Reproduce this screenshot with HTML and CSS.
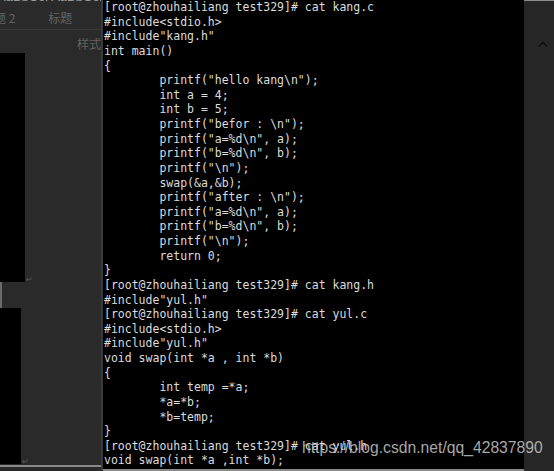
FILE: index.html
```html
<!DOCTYPE html>
<html>
<head>
<meta charset="utf-8">
<link rel="stylesheet" href="styles.css">
</head>
<body>
<div class="screen">
  <div class="left">
    <div class="cut"><span>AaBbCcI AaBbCcI AaBb</span></div>
    <div class="tabs"><span class="t1">题 2</span><span class="t2">标题</span></div>
    <div class="styles"><span>样式</span></div>
    <div class="doc">
      <div class="blk b1"><span class="ret">↵</span></div>
      <div class="gap"></div>
      <div class="blk b2"><span class="ret">↵</span></div>
      <div class="foot"></div>
    </div>
  </div>
  <div class="term"><pre>[root@zhouhailiang test329]# cat kang.c
#include&lt;stdio.h&gt;
#include"kang.h"
int main()
{
        printf("hello kang\n");
        int a = 4;
        int b = 5;
        printf("befor : \n");
        printf("a=%d\n", a);
        printf("b=%d\n", b);
        printf("\n");
        swap(&amp;a,&amp;b);
        printf("after : \n");
        printf("a=%d\n", a);
        printf("b=%d\n", b);
        printf("\n");
        return 0;
}
[root@zhouhailiang test329]# cat kang.h
#include"yul.h"
[root@zhouhailiang test329]# cat yul.c
#include&lt;stdio.h&gt;
#include"yul.h"
void swap(int *a , int *b)
{
        int temp =*a;
        *a=*b;
        *b=temp;
}
[root@zhouhailiang test329]# cat yul.h
void swap(int *a ,int *b);</pre></div>
  <div class="right">
    <svg class="chev" width="10" height="6" viewBox="0 0 10 6"><polyline points="1,5.5 5,1.5 9,5.5" fill="none" stroke="#111" stroke-width="1.6"/></svg>
  </div>
  <div class="mark">https://blog.csdn.net/qq_42837890</div>
</div>
</body>
</html>
```
FILE: styles.css
```css
html, body {
  margin: 0;
  padding: 0;
  background: #2a2a2a;
  overflow: hidden;
}
.screen {
  position: relative;
  width: 554px;
  height: 471px;
  display: flex;
}
.left {
  width: 101px;
  border-right: 2px solid #3a3a3a;
  display: flex;
  flex-direction: column;
  font-family: "Noto Sans CJK SC", "Noto Sans", sans-serif;
  color: #626262;
  font-size: 12px;
}
.cut {
  height: 3px;
  overflow: hidden;
}
.cut span {
  display: block;
  margin-top: -11px;
  margin-left: -3px;
  font-family: "Liberation Sans", sans-serif;
  font-size: 13px;
  color: #9a9a9a;
  white-space: nowrap;
}
.tabs {
  height: 27px;
  border-bottom: 1px solid #383838;
  display: flex;
  align-items: center;
  box-sizing: border-box;
  padding-top: 2px;
}
.tabs .t1 { margin-left: -6px; }
.tabs .t2 { margin-left: 33px; }
.styles {
  height: 23px;
  display: flex;
  align-items: center;
  justify-content: flex-end;
  padding-top: 3px;
  box-sizing: border-box;
}
.doc {
  flex: 1;
  display: flex;
  flex-direction: column;
}
.blk {
  background: #000;
  position: relative;
}
.b1 { width: 25px; height: 229px; }
.gap { height: 26px; border-left: 2px solid #6a6a6a; }
.b2 { width: 21px; height: 156px; }
.ret {
  position: absolute;
  right: -8px;
  bottom: -2px;
  font-size: 8px;
  color: #5a5a5a;
  font-family: "DejaVu Sans", sans-serif;
}
.foot {
  flex: 1;
  border-top: 2px solid #8a8a8a;
  margin-top: 1px;
}
.term {
  width: 421px;
  height: 469px;
  background: #000;
  border-bottom: 2px solid #8a8a8a;
  overflow: hidden;
}
.term pre {
  margin: 0;
  padding: 0 0 0 1px;
  font-family: "DejaVu Sans Mono", monospace;
  font-size: 11.5px;
  line-height: 14.62px;
  color: #dcdcdc;
}
.right {
  flex: 1;
  background: #262626;
  border-top: 1px solid #8a8a8a;
}
.chev {
  display: block;
  margin: 40px 0 0 14px;
}
.mark {
  position: absolute;
  left: 302px;
  top: 439px;
  font-family: "Liberation Sans", Arial, sans-serif;
  font-size: 15.7px;
  color: rgba(200, 200, 200, 0.85);
  white-space: nowrap;
}
```
